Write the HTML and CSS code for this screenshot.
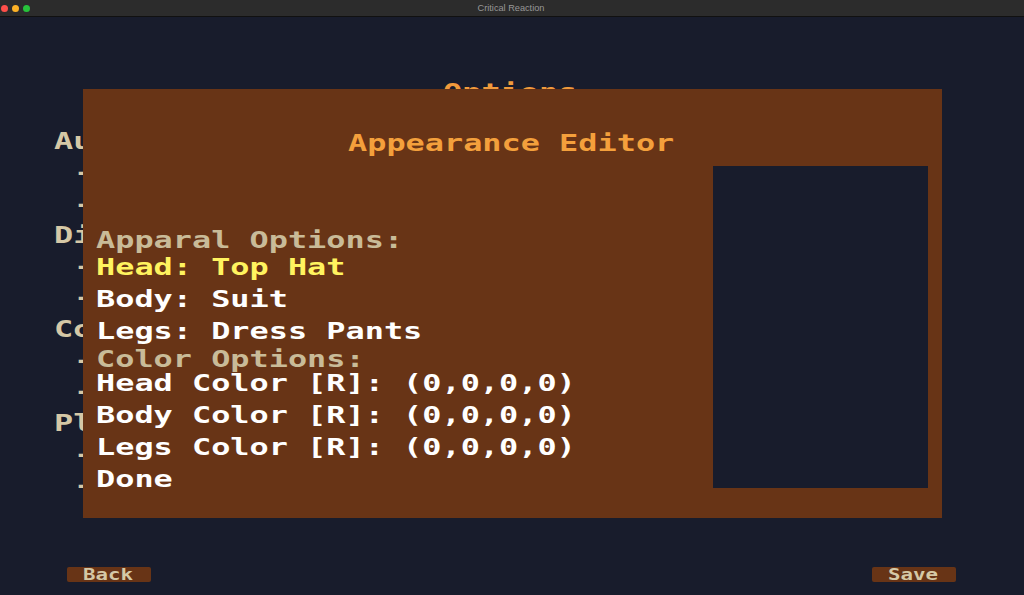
FILE: index.html
```html
<!DOCTYPE html>
<html lang="en">
<head>
    <meta charset="UTF-8">
    <meta name="viewport" content="width=device-width, initial-scale=1.0">
    <title>Critical Reaction</title>
    <link rel="stylesheet" href="styles.css">
</head>
<body>
    <div class="titlebar">
        <div class="lights">
            <span class="light red"></span>
            <span class="light yellow"></span>
            <span class="light green"></span>
        </div>
        <div class="window-title">Critical Reaction</div>
    </div>

    <div class="game">
        <h1 class="options-title"><span>Options</span></h1>
        <div class="options-list">
            <div class="section"><span>Au</span></div>
            <div class="option"><span>-</span></div>
            <div class="option"><span>-</span></div>
            <div class="section"><span>Di</span></div>
            <div class="option"><span>-</span></div>
            <div class="option"><span>-</span></div>
            <div class="section"><span>Co</span></div>
            <div class="option"><span>-</span></div>
            <div class="option"><span>-</span></div>
            <div class="section"><span>Pl</span></div>
            <div class="option"><span>-</span></div>
            <div class="option"><span>-</span></div>
        </div>
        <div class="footer">
            <div class="small-button"><span>Back</span></div>
            <div class="small-button"><span>Save</span></div>
        </div>

        <div class="editor">
            <h2 class="editor-title"><span>Appearance Editor</span></h2>
            <div class="editor-body">
                <div class="editor-menu">
                    <div class="menu-heading first"><span>Apparal Options:</span></div>
                    <div class="menu-item selected"><span>Head: Top Hat</span></div>
                    <div class="menu-item"><span>Body: Suit</span></div>
                    <div class="menu-item"><span>Legs: Dress Pants</span></div>
                    <div class="menu-heading"><span>Color Options:</span></div>
                    <div class="menu-item"><span>Head Color [R]: (0,0,0,0)</span></div>
                    <div class="menu-item"><span>Body Color [R]: (0,0,0,0)</span></div>
                    <div class="menu-item"><span>Legs Color [R]: (0,0,0,0)</span></div>
                    <div class="menu-item"><span>Done</span></div>
                </div>
                <div class="preview"></div>
            </div>
        </div>
    </div>
</body>
</html>
```

FILE: styles.css
```css
* {
    box-sizing: border-box;
}
html, body {
    height: 100%;
}
body {
    margin: 0;
    background-color: #181c2c;
    font-family: "DejaVu Sans Mono", monospace;
    font-weight: bold;
    overflow: hidden;
}

/* stretched mono stands in for the wide pixel font */
.section span, .option span, .options-title span, .editor-title span,
.menu-heading span, .menu-item span, .small-button span {
    display: inline-block;
    transform: scaleX(1.386);
    transform-origin: left center;
    white-space: pre;
}

.titlebar {
    height: 17px;
    background-color: #2c2c2c;
    border-bottom: 1px solid #111;
    display: flex;
    align-items: center;
}
.lights {
    display: flex;
    gap: 4px;
    padding-left: 1px;
}
.light {
    width: 7px;
    height: 7px;
    border-radius: 50%;
}
.red { background-color: #fe4f4a; }
.yellow { background-color: #fdb226; }
.green { background-color: #27c33b; }
.window-title {
    flex: 1;
    text-align: center;
    font-family: "Liberation Sans", sans-serif;
    font-size: 9.2px;
    font-weight: normal;
    color: #989898;
    padding-right: 32px;
}

.game {
    position: relative;
    height: 578px;
    padding: 62px 68px 13px 54px;
    display: flex;
    flex-direction: column;
}
.options-title {
    margin: 0;
    height: 30px;
    padding-left: 389px;
    font-size: 23px;
    line-height: 26px;
    color: #f09a3c;
}
.options-list {
    flex: 1;
    padding-top: 17px;
    color: #d5c8a6;
    font-size: 23px;
    line-height: 31.3px;
}
.option {
    padding-left: 20px;
}
.footer {
    display: flex;
    justify-content: space-between;
    padding-left: 13px;
}
.small-button {
    width: 84px;
    height: 15px;
    background-color: #683416;
    border-radius: 2px;
    color: #d5c8a6;
    font-size: 15px;
    line-height: 16px;
    padding-left: 16px;
}

.editor {
    position: absolute;
    left: 83px;
    top: 72px;
    width: 859px;
    height: 429px;
    background-color: #683416;
    padding: 41px 14px 30px 13px;
    display: flex;
    flex-direction: column;
}
.editor-title {
    margin: 0;
    height: 36px;
    padding-left: 252px;
    font-size: 23px;
    line-height: 26px;
    color: #f4a03c;
}
.editor-body {
    flex: 1;
    min-height: 0;
    display: flex;
    justify-content: space-between;
}
.editor-menu {
    font-size: 23px;
    line-height: 32.2px;
}
.menu-heading {
    color: #c9bb98;
    line-height: 15px;
    padding-top: 4px;
}
.menu-heading.first {
    padding-top: 64px;
    line-height: 21px;
}
.menu-item {
    color: #fff;
}
.menu-item.selected {
    color: #fff35f;
}
.preview {
    width: 215px;
    background-color: #181c2c;
}
```
